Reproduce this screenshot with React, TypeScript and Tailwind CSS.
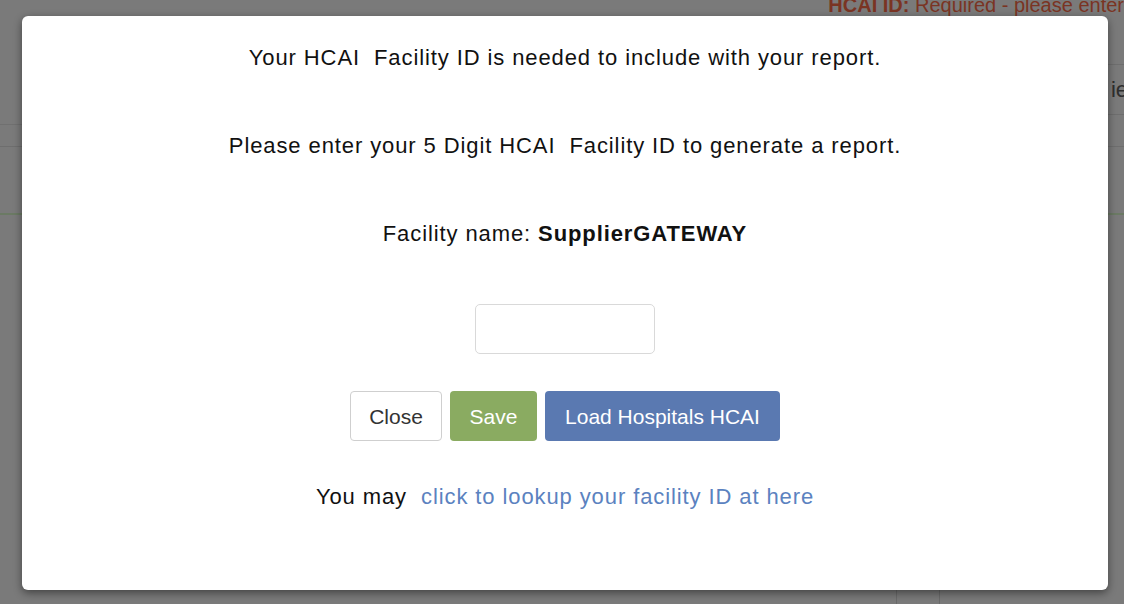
import { useState } from 'react'

const font = { fontFamily: '"Liberation Sans", Arial, Helvetica, sans-serif' }

// dimmed page that sits behind the modal
const BackdropPage = () => {
  return (
    <div className="flex h-full w-full flex-col bg-[#7a7a7a]">
      <div className="flex h-[64px] items-start justify-end overflow-hidden">
        <p className="mt-[-7px] whitespace-nowrap text-[20px] leading-[24px] text-[#7a3423]">
          <span className="font-bold">HCAI ID:</span> Required - please enter
        </p>
      </div>
      <div className="flex justify-end">
        <div className="w-[20px] border-t border-[#6e6e6e]" />
      </div>
      <div className="flex h-[49px] items-center justify-end">
        <span className="mr-[-4px] text-[22px] text-[#2e2e2e]">ie</span>
      </div>
      <div className="flex justify-end">
        <div className="w-[20px] border-t border-[#6e6e6e]" />
      </div>
      <div className="h-[9px]" />
      <div className="w-[24px] border-t border-[#707070]" />
      <div className="h-[21px]" />
      <div className="flex justify-between">
        <div className="w-[24px] border-t border-[#6e6e6e]" />
        <div className="w-[20px] border-t border-[#6e6e6e]" />
      </div>
      <div className="h-[66px]" />
      <div className="flex justify-between">
        <div className="w-[24px] border-t-2 border-[#6b7a64]" />
        <div className="w-[20px] border-t-2 border-[#6b7a64]" />
      </div>
      <div className="flex-1" />
      <div className="flex h-[14px] pl-[896px]">
        <div className="w-[44px] border-x border-[#6a6a6a]" />
      </div>
    </div>
  )
}

export default function App() {
  const [hcai, setHcai] = useState('')

  return (
    <div className="relative h-[604px] w-full overflow-hidden" style={font}>
      <BackdropPage />

      <div className="absolute left-[22px] top-[16px] flex h-[574px] w-[1086px] flex-col items-center rounded-[6px] bg-white pt-[29px] text-[22px] leading-[25px] tracking-[0.9px] text-[#111] shadow-[0_3px_8px_rgba(0,0,0,0.45)]">
        <p>Your HCAI&nbsp; Facility ID is needed to include with your report.</p>
        <p className="mt-[63px]">Please enter your 5 Digit HCAI&nbsp; Facility ID to generate a report.</p>
        <p className="mt-[63px]">
          Facility name: <span className="font-bold">SupplierGATEWAY</span>
        </p>

        <input
          value={hcai}
          onChange={(e) => setHcai(e.target.value)}
          className="mt-[58px] h-[50px] w-[180px] rounded-[5px] border border-[#d9d9d9] px-3 outline-none"
        />

        <div className="mt-[37px] flex gap-[8px] text-[21px] tracking-normal">
          <button className="h-[50px] w-[92px] rounded-[4px] border border-[#cfcfcf] bg-white text-[#333]">
            Close
          </button>
          <button className="h-[50px] w-[87px] rounded-[4px] bg-[#8aab61] text-white">
            Save
          </button>
          <button className="h-[50px] w-[235px] rounded-[4px] bg-[#5a79b1] text-white">
            Load Hospitals HCAI
          </button>
        </div>

        <p className="mt-[43px]">
          You may&nbsp; <a className="text-[#5b82c0]">click to lookup your facility ID at here</a>
        </p>
      </div>
    </div>
  )
}
